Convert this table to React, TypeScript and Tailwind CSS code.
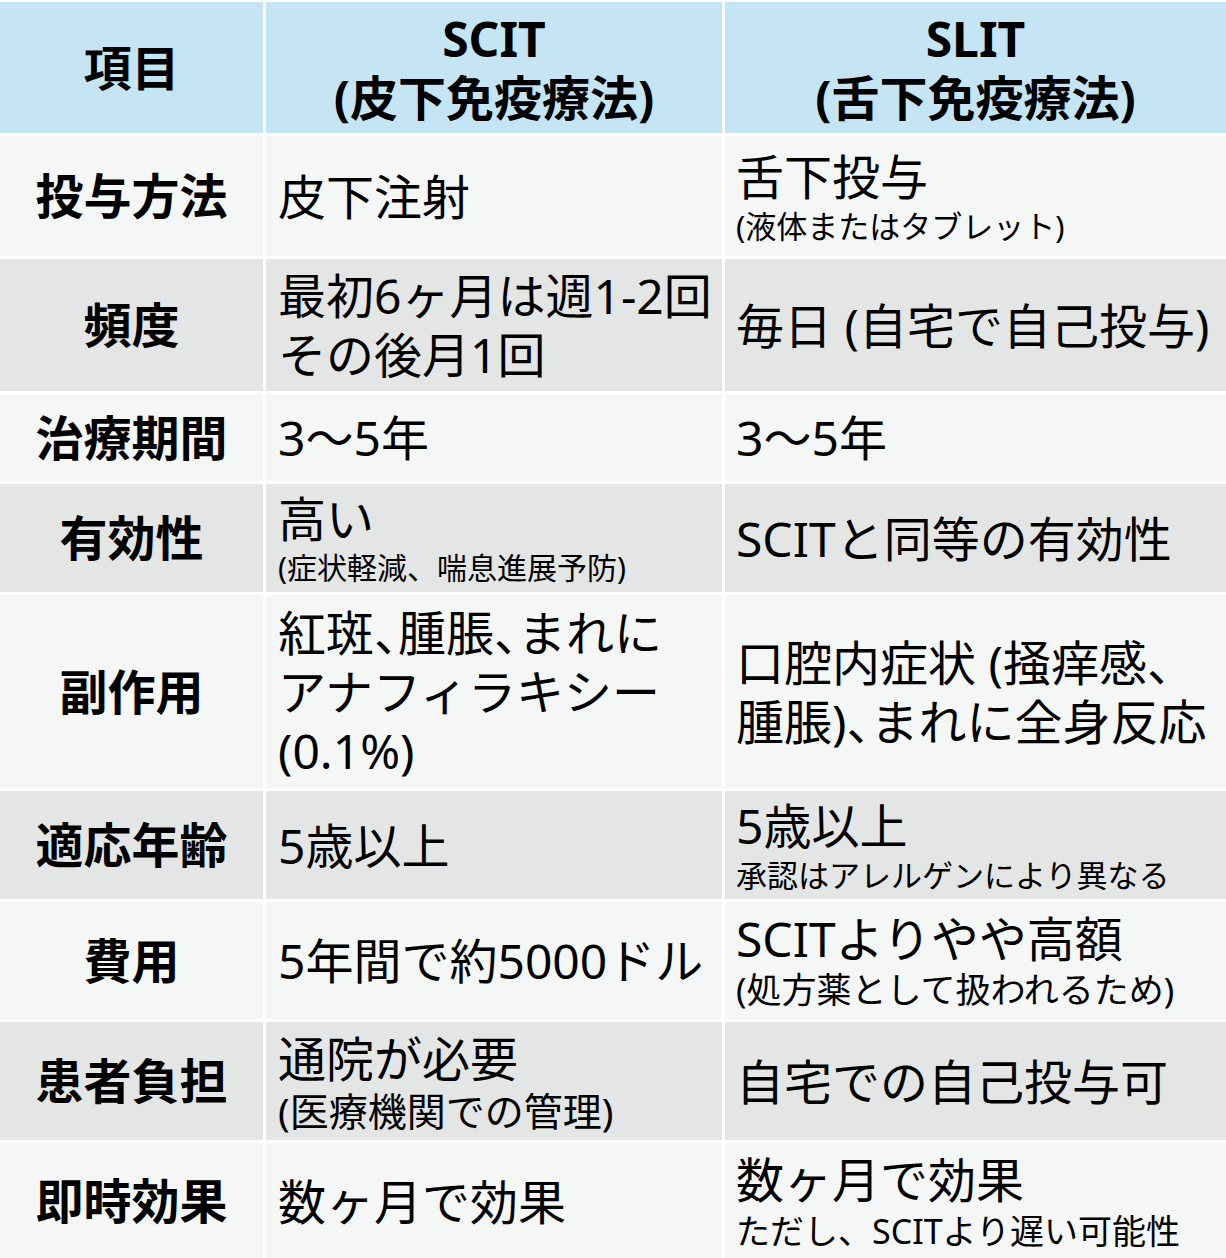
import React from 'react';

type Row = {
  label: string;
  scit: React.ReactNode;
  slit: React.ReactNode;
};

function Main({ children }: { children: React.ReactNode }) {
  return <div className="text-[48px] leading-[59px]">{children}</div>;
}

function Note({ children, size = 'text-[31px] leading-[40px]' }: { children: React.ReactNode; size?: string }) {
  return <div className={size}>{children}</div>;
}

// compact ideographic comma as in the reference
function C() {
  return <span className="[font-feature-settings:'halt']">、</span>;
}

const rows: Row[] = [
  {
    label: '投与方法',
    scit: <Main>皮下注射</Main>,
    slit: (
      <>
        <Main>舌下投与</Main>
        <Note>(液体またはタブレット)</Note>
      </>
    ),
  },
  {
    label: '頻度',
    scit: (
      <Main>
        最初6ヶ月は週1-2回
        <br />
        その後月1回
      </Main>
    ),
    slit: <Main>毎日 (自宅で自己投与)</Main>,
  },
  {
    label: '治療期間',
    scit: <Main>3〜5年</Main>,
    slit: <Main>3〜5年</Main>,
  },
  {
    label: '有効性',
    scit: (
      <>
        <Main>高い</Main>
        <Note size="text-[30px] leading-[40px]">(症状軽減、喘息進展予防)</Note>
      </>
    ),
    slit: <Main>SCITと同等の有効性</Main>,
  },
  {
    label: '副作用',
    scit: (
      <Main>
        紅斑<C />腫脹<C />まれに
        <br />
        アナフィラキシー
        <br />
        (0.1%)
      </Main>
    ),
    slit: (
      <Main>
        口腔内症状 (掻痒感、
        <br />
        腫脹)<C />まれに全身反応
      </Main>
    ),
  },
  {
    label: '適応年齢',
    scit: <Main>5歳以上</Main>,
    slit: (
      <>
        <Main>5歳以上</Main>
        <Note>承認はアレルゲンにより異なる</Note>
      </>
    ),
  },
  {
    label: '費用',
    scit: <Main>5年間で約5000ドル</Main>,
    slit: (
      <>
        <Main>SCITよりやや高額</Main>
        <Note size="text-[35px] leading-[44px]">(処方薬として扱われるため)</Note>
      </>
    ),
  },
  {
    label: '患者負担',
    scit: (
      <>
        <Main>通院が必要</Main>
        <Note size="text-[39px] leading-[46px]">(医療機関での管理)</Note>
      </>
    ),
    slit: <Main>自宅での自己投与可</Main>,
  },
  {
    label: '即時効果',
    scit: <Main>数ヶ月で効果</Main>,
    slit: (
      <>
        <Main>数ヶ月で効果</Main>
        <Note size="text-[34px] leading-[44px]">ただし、SCITより遅い可能性</Note>
      </>
    ),
  },
];

export default function App() {
  return (
    <div className="w-[1226px] h-[1258px] overflow-hidden bg-white pt-[2px] text-black font-['Noto_Sans','Noto_Sans_CJK_JP',sans-serif]">
      <div className="grid grid-cols-[263px_456px_501px] grid-rows-[131px_120px_132px_87px_108px_193px_108px_117px_118px_116px] gap-[3px]">
        <div className="bg-[#c5e5f5] flex items-center justify-center text-[48px] font-bold">
          項目
        </div>
        <div className="bg-[#c5e5f5] flex flex-col items-center justify-center text-[48px] leading-[59px] font-bold text-center">
          <div>SCIT</div>
          <div>(皮下免疫療法)</div>
        </div>
        <div className="bg-[#c5e5f5] flex flex-col items-center justify-center text-[48px] leading-[59px] font-bold text-center">
          <div>SLIT</div>
          <div>(舌下免疫療法)</div>
        </div>

        {rows.map((row, i) => {
          const bg = i % 2 === 0 ? 'bg-[#f5f7f6]' : 'bg-[#e4e6e5]';
          return (
            <React.Fragment key={row.label}>
              <div className={`${bg} flex items-center justify-center text-[48px] font-bold`}>
                {row.label}
              </div>
              <div className={`${bg} flex flex-col justify-center pl-[12px] whitespace-nowrap`}>
                {row.scit}
              </div>
              <div className={`${bg} flex flex-col justify-center pl-[11px] whitespace-nowrap`}>
                {row.slit}
              </div>
            </React.Fragment>
          );
        })}
      </div>
    </div>
  );
}
